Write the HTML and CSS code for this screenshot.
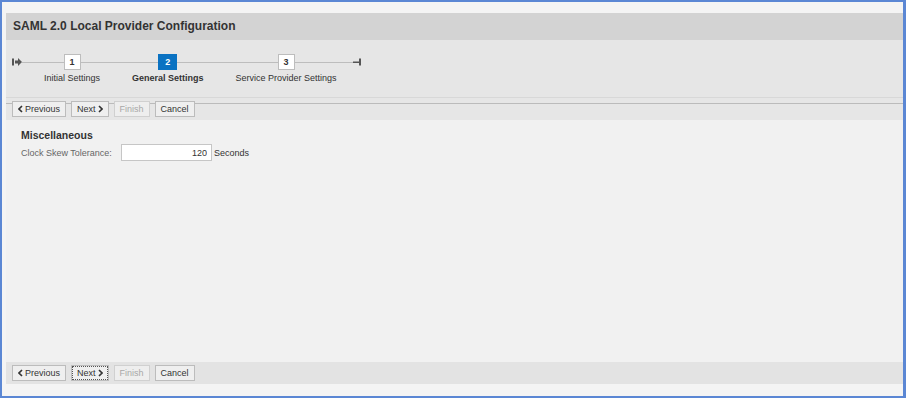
FILE: index.html
```html
<!DOCTYPE html>
<html lang="en">
<head>
    <meta charset="UTF-8">
    <title>SAML 2.0 Local Provider Configuration</title>
    <link rel="stylesheet" href="styles.css">
</head>
<body>

    <div class="frame">
        <div class="panel">

            <!-- Title -->
            <div class="title-bar">SAML 2.0 Local Provider Configuration</div>

            <!-- Roadmap -->
            <div class="roadmap">
                <div class="track">
                    <span class="rm-icon">
                        <svg width="10" height="16" viewBox="0 0 10 16">
                            <rect x="0" y="4.5" width="2" height="7" fill="#555"/>
                            <path d="M3 6.5h3V4L10 8l-4 4V9.5H3z" fill="#555"/>
                        </svg>
                    </span>
                    <div class="step">
                        <span class="step-box">1</span>
                        <span class="step-label">Initial Settings</span>
                    </div>
                    <div class="step active">
                        <span class="step-box">2</span>
                        <span class="step-label">General Settings</span>
                    </div>
                    <div class="step">
                        <span class="step-box">3</span>
                        <span class="step-label">Service Provider Settings</span>
                    </div>
                    <span class="rm-icon">
                        <svg width="9" height="16" viewBox="0 0 9 16">
                            <rect x="0" y="7.5" width="6" height="1.5" fill="#555"/>
                            <rect x="6" y="4.5" width="2" height="7" fill="#555"/>
                        </svg>
                    </span>
                </div>
            </div>

            <!-- Top toolbar -->
            <div class="toolbar top">
                <button class="btn"><svg class="chev" width="5" height="8" viewBox="0 0 5 8"><polyline points="4,1 1,4 4,7" fill="none" stroke="#333" stroke-width="1.6"/></svg> Previous</button>
                <button class="btn">Next <svg class="chev" width="5" height="8" viewBox="0 0 5 8"><polyline points="1,1 4,4 1,7" fill="none" stroke="#333" stroke-width="1.6"/></svg></button>
                <button class="btn" disabled>Finish</button>
                <button class="btn">Cancel</button>
            </div>

            <!-- Content -->
            <div class="content">
                <h3>Miscellaneous</h3>
                <div class="field">
                    <label for="skew">Clock Skew Tolerance:</label>
                    <input id="skew" type="text" value="120">
                    <span class="unit">Seconds</span>
                </div>
            </div>

            <!-- Bottom toolbar -->
            <div class="toolbar bottom">
                <button class="btn"><svg class="chev" width="5" height="8" viewBox="0 0 5 8"><polyline points="4,1 1,4 4,7" fill="none" stroke="#333" stroke-width="1.6"/></svg> Previous</button>
                <button class="btn focused">Next <svg class="chev" width="5" height="8" viewBox="0 0 5 8"><polyline points="1,1 4,4 1,7" fill="none" stroke="#333" stroke-width="1.6"/></svg></button>
                <button class="btn" disabled>Finish</button>
                <button class="btn">Cancel</button>
            </div>

        </div>
    </div>

</body>
</html>
```

FILE: styles.css
```css
/* Page and frame */
body {
    margin: 0;
    background: #ffffff;
    font-family: "Liberation Sans", Arial, sans-serif;
    color: #333333;
}

.frame {
    width: 897px;
    height: 383px;
    background: #f4f4f4;
    border-style: solid;
    border-color: #5b87d4;
    border-width: 2px 3px 3px 2px;
    padding: 11px 0 0 4px;
}

.panel {
    width: 897px;
    background: #f1f1f1;
}

/* Title */
.title-bar {
    height: 27px;
    line-height: 27px;
    padding-left: 7px;
    background: #d3d3d3;
    font-size: 12px;
    font-weight: bold;
    color: #333333;
}

/* Roadmap */
.roadmap {
    height: 43px;
    padding: 14px 0 0 6px;
    background: #e6e6e6;
    border-bottom: 1px solid #d8d8d8;
}

.track {
    display: inline-flex;
    align-items: flex-start;
    background: linear-gradient(#bdbdbd, #bdbdbd) no-repeat 10px 8px / calc(100% - 16px) 1px;
}

.rm-icon {
    display: flex;
    height: 16px;
}

.step {
    display: flex;
    flex-direction: column;
    align-items: center;
    padding: 0 16px;
}

.step:first-of-type {
    margin-left: 6px;
}

.step-box {
    width: 15px;
    height: 14px;
    line-height: 14px;
    text-align: center;
    background: #ffffff;
    border: 1px solid #bdbdbd;
    font-size: 9px;
    font-weight: bold;
    color: #333333;
}

.step.active .step-box {
    width: 17px;
    background: #0a72c2;
    border-color: #0a72c2;
    color: #ffffff;
}

.step-label {
    margin-top: 3px;
    font-size: 9px;
    line-height: 11px;
    color: #333333;
    white-space: nowrap;
}

.step.active .step-label {
    font-weight: bold;
}

/* Toolbars */
.toolbar {
    display: flex;
    gap: 5px;
    height: 22px;
    padding: 0 6px;
    align-items: center;
}

.toolbar.top {
    background: linear-gradient(#bbbbbb, #bbbbbb) no-repeat 0 5px / 100% 1px, #e6e6e6;
}

.toolbar.bottom {
    background: #e3e3e3;
}

.btn {
    height: 16px;
    padding: 0 5px;
    background: #efefef;
    border: 1px solid #bcbcbc;
    border-radius: 0;
    font-family: "Liberation Sans", Arial, sans-serif;
    font-size: 9px;
    color: #333333;
    display: flex;
    align-items: center;
    gap: 2px;
}

.btn:disabled {
    color: #a8a8a8;
    border-color: #d0d0d0;
    background: #eeeeee;
}

.btn.focused {
    outline: 1px dotted #555555;
    outline-offset: -2px;
}

.chev {
    display: block;
}

/* Content */
.content {
    height: 233px;
    padding: 9px 15px 0;
}

.content h3 {
    margin: 0;
    font-size: 10.5px;
    line-height: 13px;
    color: #333333;
}

.field {
    display: flex;
    align-items: center;
    margin-top: 2px;
    font-size: 9px;
}

.field label {
    width: 100px;
    color: #666666;
}

.field input {
    width: 81px;
    height: 15px;
    padding: 0 4px;
    border: 1px solid #c6c6c6;
    background: #ffffff;
    text-align: right;
    font-family: "Liberation Sans", Arial, sans-serif;
    font-size: 9px;
    color: #333333;
}

.unit {
    margin-left: 2px;
    color: #333333;
}
```
